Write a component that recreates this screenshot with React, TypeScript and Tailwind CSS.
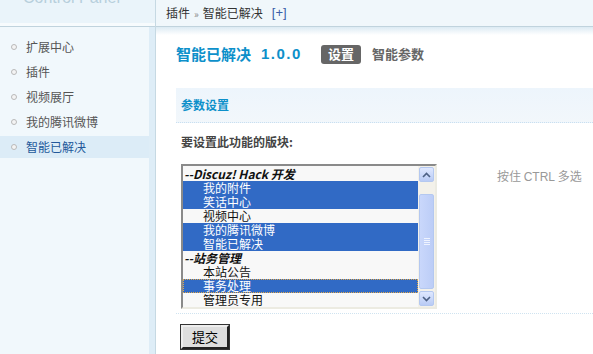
import React from "react";

const navItems = ["扩展中心", "插件", "视频展厅", "我的腾讯微博", "智能已解决"];

type Opt = { label: string; group?: boolean; sel?: boolean; focus?: boolean };

const options: Opt[] = [
  { label: "--Discuz! Hack 开发", group: true },
  { label: "我的附件", sel: true },
  { label: "笑话中心", sel: true },
  { label: "视频中心" },
  { label: "我的腾讯微博", sel: true },
  { label: "智能已解决", sel: true },
  { label: "--站务管理", group: true },
  { label: "本站公告" },
  { label: "事务处理", sel: true, focus: true },
  { label: "管理员专用" },
];

function Arrow({ up }: { up?: boolean }) {
  return (
    <div className="h-[15px] w-[15px] rounded-[2px] border border-[#b4c8f0] bg-gradient-to-b from-[#dfe8ff] to-[#b9cbf5] flex items-center justify-center">
      <svg width="9" height="6" viewBox="0 0 9 6">
        <path d={up ? "M1 5 L4.5 1.5 L8 5" : "M1 1 L4.5 4.5 L8 1"} fill="none" stroke="#4d6185" strokeWidth="1.6" />
      </svg>
    </div>
  );
}

export default function App() {
  return (
    <div className="w-[593px] h-[354px] overflow-hidden flex bg-white text-[12px] text-[#333] font-['Noto_Sans_CJK_SC','Liberation_Sans',sans-serif]">
      {/* left column */}
      <div className="w-[156px] shrink-0 flex flex-col border-r border-[#c6d9e3]">
        <div className="h-[23px] bg-[#eaf4fa] overflow-hidden pl-[23px]">
          <div className="-mt-[11px] text-[16px] text-[#b7cfdc] font-['Liberation_Sans',sans-serif] leading-[18px] whitespace-nowrap">Control Panel</div>
        </div>
        <div className="h-[4px] bg-[#f7fbfd] border-b border-[#c0d3dd]" />
        <div className="flex-1 flex">
          <div className="w-[149px] bg-[#f1f8fc] pt-[9px]">
            {navItems.map((t, i) => {
              const active = i === navItems.length - 1;
              return (
                <div key={t} className={`h-[22px] mb-[3px] flex items-center pl-[11px] ${active ? "bg-[#dcecf7]" : ""}`}>
                  <span className="w-[6px] h-[6px] rounded-full border border-[#b9b9b9] bg-[#f4f4f4]" />
                  <span className={`ml-[9px] text-[12px] ${active ? "text-[#22589a]" : "text-[#555]"}`}>{t}</span>
                </div>
              );
            })}
          </div>
          <div className="w-[6px] bg-[#deedf7]" />
        </div>
      </div>

      {/* main */}
      <div className="flex-1 flex flex-col min-w-0">
        <div className="h-[27px] shrink-0 bg-[#f0f7fb] border-b border-[#c0d3dd] flex items-center pl-[10px] text-[12px] text-[#333]">
          <span>插件</span>
          <span className="mx-[4px] text-[10px] text-[#888]">»</span>
          <span>智能已解决</span>
          <span className="ml-[9px] text-[#3a5ea8] font-['Liberation_Sans',sans-serif] text-[13px]">[+]</span>
        </div>
        <div className="h-[8px] shrink-0 bg-gradient-to-b from-[#dcebf3] to-white" />

        <div className="pl-[20px] flex flex-col">
          <div className="mt-[9px] h-[20px] flex items-center">
            <span className="text-[15px] font-bold text-[#0d90ca]">智能已解决</span>
            <span className="ml-[10px] text-[15px] font-bold text-[#0d90ca] font-['Liberation_Sans',sans-serif] tracking-[1.5px]">1.0.0</span>
            <span className="ml-[19px] h-[19px] px-[7px] rounded-[3px] bg-[#666] text-white font-bold text-[13px] flex items-center">设置</span>
            <span className="ml-[11px] text-[13px] font-bold text-[#666]">智能参数</span>
          </div>

          <div className="mt-[24px] h-[35px] bg-gradient-to-b from-[#edf5fc] to-[#f2f7fb] border-b border-dotted border-[#c9dff0] flex items-center pl-[5px]">
            <span className="text-[12px] font-bold text-[#0d90ca]">参数设置</span>
          </div>

          <div className="mt-[12px] pl-[5px] text-[12px] font-bold text-[#444] h-[14px] leading-[14px]">要设置此功能的版块:</div>

          <div className="mt-[15px] pl-[5px] flex items-start">
            <div className="w-[256px] h-[145px] border-2 border-t-[#8a8a8a] border-l-[#8a8a8a] border-b-[#ecebe2] border-r-[#ecebe2] bg-[#f8f8f8] flex">
              <div className="flex-1 pt-[1px]">
                {options.map((o) => (
                  <div
                    key={o.label}
                    className={`h-[14px] leading-[14px] text-[12px] whitespace-nowrap ${o.sel ? "bg-[#316ac5] text-white" : "text-[#111]"} ${o.focus ? "outline outline-1 outline-dotted outline-[#e2a84a] -outline-offset-1" : ""} ${o.group ? "pl-[1px] font-bold italic" : "pl-[20px]"}`}
                  >
                    {o.label}
                  </div>
                ))}
              </div>
              <div className="w-[17px] flex flex-col items-center pt-[1px] pb-[1px] bg-[#f3f1ea]">
                <Arrow up />
                <div className="h-[12px]" />
                <div className="w-[15px] flex-1 rounded-[2px] border border-[#b4c8f0] bg-gradient-to-r from-[#c9d7fb] to-[#bccdf7] flex items-center justify-center">
                  <div className="flex flex-col gap-[1px]">
                    <div className="w-[6px] h-[1px] bg-[#eef3ff]" />
                    <div className="w-[6px] h-[1px] bg-[#eef3ff]" />
                    <div className="w-[6px] h-[1px] bg-[#eef3ff]" />
                    <div className="w-[6px] h-[1px] bg-[#eef3ff]" />
                  </div>
                </div>
                <div className="h-[2px]" />
                <Arrow />
              </div>
            </div>
            <div className="ml-[60px] mt-[3px] text-[12px] text-[#999]">
              按住 <span className="font-['Liberation_Sans',sans-serif]">CTRL</span> 多选
            </div>
          </div>

          <div className="mt-[4px] border-b border-dotted border-[#cfe3f0]" />

          <div className="mt-[11px] pl-[5px]">
            <button className="w-[48px] h-[24px] bg-[#dedede] border-2 border-t-[#eee] border-l-[#eee] border-b-[#222] border-r-[#222] outline outline-1 outline-[#333] text-[13px] text-black flex items-center justify-center">
              提交
            </button>
          </div>
        </div>
      </div>
    </div>
  );
}
